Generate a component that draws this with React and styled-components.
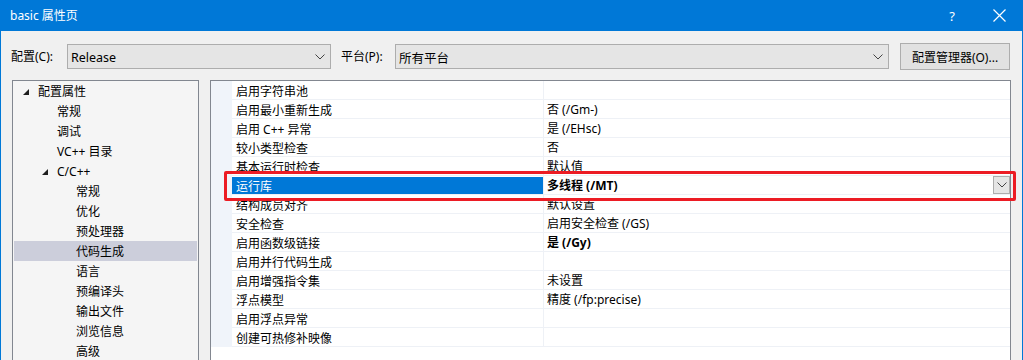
import React from "react";
import styled, { createGlobalStyle } from "styled-components";

const GlobalStyle = createGlobalStyle`
    html, body {
        margin: 0;
        padding: 0;
        background: #f0f0f0;
    }
    body {
        font-family: "Noto Sans", "Noto Sans CJK SC", sans-serif;
        font-size: 12px;
        color: #000;
    }
`;

const tree = [
    { label: "配置属性", level: 0, open: true },
    { label: "常规", level: 1 },
    { label: "调试", level: 1 },
    { label: "VC++ 目录", level: 1 },
    { label: "C/C++", level: 1, open: true },
    { label: "常规", level: 2 },
    { label: "优化", level: 2 },
    { label: "预处理器", level: 2 },
    { label: "代码生成", level: 2, selected: true },
    { label: "语言", level: 2 },
    { label: "预编译头", level: 2 },
    { label: "输出文件", level: 2 },
    { label: "浏览信息", level: 2 },
    { label: "高级", level: 2 },
];

const props = [
    { name: "启用字符串池", value: "" },
    { name: "启用最小重新生成", value: "否 (/Gm-)" },
    { name: "启用 C++ 异常", value: "是 (/EHsc)" },
    { name: "较小类型检查", value: "否" },
    { name: "基本运行时检查", value: "默认值" },
    { name: "运行库", value: "多线程 (/MT)", bold: true, selected: true },
    { name: "结构成员对齐", value: "默认设置" },
    { name: "安全检查", value: "启用安全检查 (/GS)" },
    { name: "启用函数级链接", value: "是 (/Gy)", bold: true },
    { name: "启用并行代码生成", value: "" },
    { name: "启用增强指令集", value: "未设置" },
    { name: "浮点模型", value: "精度 (/fp:precise)" },
    { name: "启用浮点异常", value: "" },
    { name: "创建可热修补映像", value: "" },
];

const Chevron = () => (
    <svg width="10" height="6" viewBox="0 0 10 6">
        <polyline points="0.5,0.5 5,5 9.5,0.5" fill="none" stroke="#444" strokeWidth="1" />
    </svg>
);

const Expander = () => (
    <svg width="6" height="6" viewBox="0 0 6 6">
        <polygon points="6,0 6,6 0,6" fill="#1e1e1e" />
    </svg>
);

const App = () => {
    return (
        <Window>
            <GlobalStyle />
            <TitleBar>
                <Title>basic 属性页</Title>
                <HelpButton>?</HelpButton>
                <CloseButton>
                    <svg width="13" height="13" viewBox="0 0 13 13">
                        <path d="M0.5 0.5 L12.5 12.5 M12.5 0.5 L0.5 12.5" stroke="#fff" strokeWidth="1.2" />
                    </svg>
                </CloseButton>
            </TitleBar>

            <ConfigRow>
                <Label width={56}>配置(C):</Label>
                <Select width={264}>
                    <span>Release</span>
                    <Chevron />
                </Select>
                <Label width={54} gap={10}>平台(P):</Label>
                <Select width={494}>
                    <span>所有平台</span>
                    <Chevron />
                </Select>
                <Button>配置管理器(O)...</Button>
            </ConfigRow>

            <Main>
                <TreePanel>
                    {tree.map((item, i) => (
                        <TreeRow key={i} selected={item.selected}>
                            <TreeItem level={item.level}>
                                <ExpandSlot>{item.open && <Expander />}</ExpandSlot>
                                {item.label}
                            </TreeItem>
                        </TreeRow>
                    ))}
                </TreePanel>

                <GridPanel>
                    {props.map((p, i) => (
                        <GridRow key={i}>
                            <Gutter />
                            <NameCell>
                                <NameText selected={p.selected}>{p.name}</NameText>
                            </NameCell>
                            <ValueCell bold={p.bold}>
                                <ValueText>{p.value}</ValueText>
                                {p.selected && (
                                    <DropButton>
                                        <Chevron />
                                    </DropButton>
                                )}
                            </ValueCell>
                        </GridRow>
                    ))}
                </GridPanel>
            </Main>

            {/* red annotation frame drawn over the selected row */}
            <Highlight />
        </Window>
    );
};

const Window = styled.div`
    position: relative;
    width: 1023px;
    height: 360px;
    overflow: hidden;
    box-sizing: border-box;
    border-left: 1px solid #0078d7;
    border-right: 1px solid #0078d7;
    background: #f0f0f0;
`;

const TitleBar = styled.div`
    display: flex;
    align-items: center;
    height: 31px;
    margin: 0 -1px;
    padding-left: 10px;
    background: #0078d7;
    color: #fff;
`;

const Title = styled.div`
    flex: 1;
    font-size: 12px;
    line-height: 16px;
`;

const HelpButton = styled.div`
    width: 46px;
    text-align: center;
    font-size: 13px;
    margin-right: 1px;
`;

const CloseButton = styled.div`
    display: flex;
    justify-content: center;
    align-items: center;
    width: 46px;
    margin-right: 1px;
`;

const ConfigRow = styled.div`
    display: flex;
    align-items: center;
    height: 49px;
    padding-top: 2px;
    box-sizing: border-box;
`;

const Label = styled.div`
    width: ${p => p.width}px;
    margin-left: ${p => (p.gap ? p.gap : 10)}px;
    line-height: 16px;
    padding-top: 1px;
`;

const Select = styled.div`
    display: flex;
    align-items: center;
    justify-content: space-between;
    width: ${p => p.width}px;
    height: 25px;
    box-sizing: border-box;
    padding: 1px 5px 0 3px;
    border: 1px solid #adadad;
    background: #e5e5e5;
    font-size: 12.5px;
`;

const Button = styled.div`
    display: flex;
    align-items: center;
    justify-content: center;
    width: 110px;
    height: 27px;
    margin-left: 11px;
    padding-top: 1px;
    box-sizing: border-box;
    border: 1px solid #adadad;
    background: #e1e1e1;
`;

const Main = styled.div`
    display: flex;
    gap: 11px;
    padding-left: 11px;
    height: 280px;
`;

const TreePanel = styled.div`
    width: 187px;
    height: 300px;
    box-sizing: border-box;
    border: 1px solid #828790;
    background: #f5f5f5;
`;

const TreeRow = styled.div`
    height: 20px;
    margin: 0 1px;
    background: ${p => (p.selected ? "#cccedb" : "transparent")};
`;

const TreeItem = styled.div`
    display: flex;
    align-items: center;
    height: 20px;
    box-sizing: border-box;
    padding-top: 2px;
    padding-left: ${p => 9 + p.level * 19}px;
    line-height: 16px;
`;

const ExpandSlot = styled.span`
    display: inline-flex;
    align-items: center;
    width: 15px;
    height: 16px;
`;

const GridPanel = styled.div`
    width: 801px;
    height: 300px;
    box-sizing: border-box;
    border: 1px solid #828790;
    border-bottom: none;
    background: #fff;
`;

const GridRow = styled.div`
    display: flex;
    height: 19px;
`;

const Gutter = styled.div`
    width: 21px;
    background: #f0f4fa;
`;

const NameCell = styled.div`
    width: 312px;
    box-sizing: border-box;
    border-bottom: 1px solid #eef1f6;
    border-right: 1px solid #eef1f6;
    padding-top: 1px;
`;

const NameText = styled.div`
    height: 17px;
    padding-left: 4px;
    line-height: 19px;
    background: ${p => (p.selected ? "#0078d7" : "transparent")};
    color: ${p => (p.selected ? "#fff" : "#000")};
`;

const ValueCell = styled.div`
    flex: 1;
    display: flex;
    align-items: flex-start;
    justify-content: space-between;
    box-sizing: border-box;
    padding-left: 3px;
    border-bottom: 1px solid #eef1f6;
    font-weight: ${p => (p.bold ? 700 : 400)};
`;

const ValueText = styled.span`
    line-height: 20px;
`;

const DropButton = styled.div`
    display: flex;
    align-items: center;
    justify-content: center;
    width: 17px;
    height: 18px;
    box-sizing: border-box;
    border: 1px solid #adadad;
    background: #e5e5e5;
`;

const Highlight = styled.div`
    position: absolute;
    left: 223px;
    top: 171px;
    width: 792px;
    height: 30px;
    box-sizing: border-box;
    border: 3px solid #ec1c24;
    border-radius: 2px;
    pointer-events: none;
`;

export default App;
